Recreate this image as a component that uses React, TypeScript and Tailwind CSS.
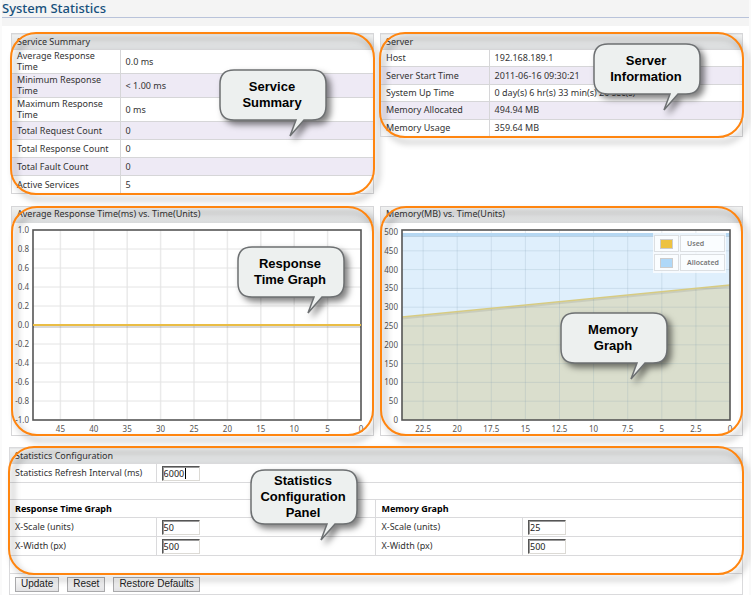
import type { ReactNode } from 'react';

const services = [
  ['Average Response Time', '0.0 ms'],
  ['Minimum Response Time', '< 1.00 ms'],
  ['Maximum Response Time', '0 ms'],
  ['Total Request Count', '0'],
  ['Total Response Count', '0'],
  ['Total Fault Count', '0'],
  ['Active Services', '5'],
];

const server = [
  ['Host', '192.168.189.1'],
  ['Server Start Time', '2011-06-16 09:30:21'],
  ['System Up Time', '0 day(s) 6 hr(s) 33 min(s) 20 sec(s)'],
  ['Memory Allocated', '494.94 MB'],
  ['Memory Usage', '359.64 MB'],
];

function Outline() {
  return (
    <div className="pointer-events-none absolute -inset-px rounded-[26px] border-2 border-[#ff850f] drop-shadow-[4px_5px_3px_rgba(0,0,0,0.4)]" />
  );
}

function Callout({ place, lines, tall = false }: { place: string; lines: string[]; tall?: boolean }) {
  const b = tall ? 56 : 52;
  return (
    <div className={`absolute z-10 w-[108px] ${place}`}>
      <svg
        width="108"
        height={b + 18}
        className="absolute left-0 top-0 overflow-visible drop-shadow-[4px_4px_3px_rgba(0,0,0,0.5)]"
        aria-hidden="true"
      >
        <path
          d={`M15 1H93Q107 1 107 15V${b - 15}Q107 ${b - 1} 93 ${b - 1}H85L71 ${b + 15}L77 ${b - 1}H15Q1 ${b - 1} 1 ${b - 15}V15Q1 1 15 1Z`}
          fill="#edf0ef"
          stroke="#6d7072"
          strokeWidth="1.5"
        />
      </svg>
      <p
        className={`relative pr-0.5 text-center font-['Liberation_Sans',Arial,sans-serif] text-[13px] font-bold leading-4 text-black ${tall ? 'pt-1' : 'pt-2.5'}`}
      >
        {lines.map((line) => (
          <span key={line} className="block">
            {line}
          </span>
        ))}
      </p>
    </div>
  );
}

const headClass =
  'h-4 bg-linear-to-b from-[#f0f1f1] to-[#d9dbdc] px-[5px] text-left font-normal leading-[14px] text-[#333]';

function InfoPanel({
  title,
  rows,
  height,
  rowHeight,
  children,
}: {
  title: string;
  rows: string[][];
  height: string;
  rowHeight: string;
  children: ReactNode;
}) {
  return (
    <section className="relative self-start">
      <table className={`w-full table-fixed border-collapse border border-[#d6d6d8] ${height}`}>
        <colgroup>
          <col className="w-[30%]" />
          <col />
        </colgroup>
        <thead>
          <tr>
            <th colSpan={2} className={headClass}>
              {title}
            </th>
          </tr>
        </thead>
        <tbody>
          {rows.map(([name, value]) => (
            <tr key={name} className={`even:bg-[#eeeaf5] ${rowHeight}`}>
              <th
                scope="row"
                className="border border-[#d6d6d8] px-[5px] pb-px text-left font-normal leading-[11px]"
              >
                {name}
              </th>
              <td className="border border-[#d6d6d8] px-[5px] pb-px leading-[11px]">{value}</td>
            </tr>
          ))}
        </tbody>
      </table>
      <Outline />
      {children}
    </section>
  );
}

function ChartPanel({ title, chart, children }: { title: string; chart: ReactNode; children: ReactNode }) {
  return (
    <section className="relative border border-[#d6d6d8]">
      <h2 className={headClass}>{title}</h2>
      {chart}
      <Outline />
      {children}
    </section>
  );
}

const chartClass = "block h-auto w-full font-['Noto_Sans',sans-serif] text-[8px]";

function ResponseChart() {
  return (
    <svg viewBox="0 1 361 212" className={chartClass} role="img" aria-label="Average response time">
      {Array.from({ length: 9 }, (_, i) => (
        <path key={i} d={`M${349 - 33.4 * (i + 1)} 8V197`} stroke="#eaeaea" strokeWidth="1.5" />
      ))}
      {Array.from({ length: 9 }, (_, i) => (
        <path key={i} d={`M21 ${8 + 19 * (i + 1)}H349`} stroke="#e4e4e4" />
      ))}
      <rect x="21" y="8" width="328" height="190" fill="none" stroke="#555" strokeWidth="1.6" />
      <path d="M21 105H349" stroke="#000" strokeOpacity="0.15" strokeWidth="2" />
      <path d="M21 103H349" stroke="#eabd45" strokeWidth="2" />
      <g fill="#545454">
        {Array.from({ length: 11 }, (_, i) => (
          <text key={i} x="17" y={11 + 19 * i} textAnchor="end">
            {((5 - i) / 5).toFixed(1)}
          </text>
        ))}
        {Array.from({ length: 10 }, (_, i) => (
          <text key={i} x={349 - 33.4 * i} y="210" textAnchor="middle">
            {i * 5}
          </text>
        ))}
      </g>
    </svg>
  );
}

function MemoryChart() {
  return (
    <svg viewBox="0 1 361 212" className={chartClass} role="img" aria-label="Memory used and allocated">
      <path d="M21 12H349V63L21 95Z" fill="#dfeffc" />
      <path d="M21 95L349 63V198H21Z" fill="#dadecd" />
      {Array.from({ length: 9 }, (_, i) => (
        <path key={i} d={`M${349 - 34.1 * (i + 1)} 8V197`} stroke="#7c9ab0" strokeOpacity="0.2" />
      ))}
      {Array.from({ length: 9 }, (_, i) => (
        <path key={i} d={`M21 ${198 - 18.8 * (i + 1)}H349`} stroke="#7c9ab0" strokeOpacity="0.2" />
      ))}
      <path d="M21 12.5H349" stroke="#b5d7f2" strokeWidth="3" />
      <path d="M21 14.5H349" stroke="#a2bdd2" strokeOpacity="0.6" />
      <path d="M21 96.5L349 64.5" stroke="#000" strokeOpacity="0.08" strokeWidth="2" />
      <path d="M21 95L349 63" stroke="#d7cb82" strokeWidth="1.5" />
      <rect x="21" y="8" width="328" height="190" fill="none" stroke="#555" strokeWidth="1.6" />
      <rect x="272" y="11" width="73" height="40" fill="#fff" fillOpacity="0.7" />
      {['Used', 'Allocated'].map((name, i) => (
        <g key={name}>
          <rect x="273.5" y={13.5 + 19 * i} width="24" height="16" fill="#fafdff" stroke="#dcdfe2" />
          <rect x="299.5" y={13.5 + 19 * i} width="44" height="16" fill="#fafdff" stroke="#dcdfe2" />
          <rect
            x="279.5"
            y={17.5 + 19 * i}
            width="12"
            height="9"
            fill={i ? '#afd8f8' : '#edc240'}
            stroke="#ccc"
          />
          <text x="306" y={24 + 19 * i} className="text-[7px] font-semibold" fill="#777">
            {name}
          </text>
        </g>
      ))}
      <g fill="#545454">
        {Array.from({ length: 11 }, (_, i) => (
          <text key={i} x="17" y={201 - 18.8 * i} textAnchor="end">
            {i * 50}
          </text>
        ))}
        {Array.from({ length: 10 }, (_, i) => (
          <text key={i} x={349 - 34.1 * i} y="210" textAnchor="middle">
            {i * 2.5}
          </text>
        ))}
      </g>
    </svg>
  );
}

function NumberCells({ id, label, value, span = 1 }: { id: string; label: string; value: string; span?: number }) {
  return (
    <>
      <th scope="row" className="border border-[#dadadc] px-[5px] text-left font-normal">
        <label htmlFor={id}>{label}</label>
      </th>
      <td colSpan={span} className="border border-[#dadadc] px-[5px]">
        <div className="relative">
          <input
            id={id}
            defaultValue={value}
            className="block h-[15px] w-[38px] border border-b-[#dcdad5] border-l-[#555] border-r-[#dcdad5] border-t-[#555] bg-white pl-px text-[9px] leading-3 text-[#222] shadow-[inset_1px_1px_0_#999] outline-none"
          />
          {span > 1 && <span className="absolute left-[23px] top-0.5 h-[11px] w-px bg-black" />}
        </div>
      </td>
    </>
  );
}

const buttonClass =
  "h-[15px] border border-[#a9a9ab] bg-linear-to-b from-[#fafafa] to-[#e2e2e4] px-[5px] font-['Liberation_Sans',Arial,sans-serif] text-[10px] leading-3 text-[#222]";

export default function App() {
  return (
    <main className="border-x-2 border-[#fafafa] bg-white font-['Noto_Sans','Open_Sans',sans-serif] text-[9px] text-[#333]">
      <header className="border-b-8 border-[#f4f4f4]">
        <h1 className="h-[18px] border-b border-[#b9c3da] bg-[#f4f4f4] text-[13px] font-medium leading-4 text-[#17507c]">
          System Statistics
        </h1>
      </header>

      <div className="grid grid-cols-2 gap-x-1.5 gap-y-3 pl-[9px] pr-1.5 pt-[7px]">
        <InfoPanel title="Service Summary" rows={services} height="h-auto" rowHeight="h-[18px]">
          <Callout place="left-[208px] top-[36px]" lines={['Service', 'Summary']} />
        </InfoPanel>
        <InfoPanel title="Server" rows={server} height="h-[104px]" rowHeight="h-[17px]">
          <Callout place="left-[213px] top-[10px]" lines={['Server', 'Information']} />
        </InfoPanel>
        <ChartPanel title="Average Response Time(ms) vs. Time(Units)" chart={<ResponseChart />}>
          <Callout place="left-[225px] top-[39px]" lines={['Response', 'Time Graph']} />
        </ChartPanel>
        <ChartPanel title="Memory(MB) vs. Time(Units)" chart={<MemoryChart />}>
          <Callout place="left-[179px] top-[105px]" lines={['Memory', 'Graph']} />
        </ChartPanel>
      </div>

      <form className="ml-[7px] mr-1.5 mt-[11px]" onSubmit={(e) => e.preventDefault()}>
        <div className="relative">
          <table className="w-full table-fixed border-collapse border border-[#dadadc] leading-3">
            <colgroup>
              <col className="w-[20%]" />
              <col className="w-[30%]" />
              <col className="w-[20%]" />
              <col className="w-[30%]" />
            </colgroup>
            <thead>
              <tr>
                <th colSpan={4} className={headClass}>
                  Statistics Configuration
                </th>
              </tr>
            </thead>
            <tbody>
              <tr className="h-[19px]">
                <NumberCells id="refresh" label="Statistics Refresh Interval (ms)" value="6000" span={3} />
              </tr>
              <tr className="h-[17px]">
                <td colSpan={4} className="border border-[#dadadc]" />
              </tr>
              <tr className="h-[18px] text-left text-black">
                <th colSpan={2} className="border border-[#dadadc] px-[5px] font-bold">
                  Response Time Graph
                </th>
                <th colSpan={2} className="border border-[#dadadc] px-[5px] font-bold">
                  Memory Graph
                </th>
              </tr>
              <tr className="h-[19px]">
                <NumberCells id="response-scale" label="X-Scale (units)" value="50" />
                <NumberCells id="memory-scale" label="X-Scale (units)" value="25" />
              </tr>
              <tr className="h-[19px]">
                <NumberCells id="response-width" label="X-Width (px)" value="500" />
                <NumberCells id="memory-width" label="X-Width (px)" value="500" />
              </tr>
              <tr className="h-[18px]">
                <td colSpan={4} className="border border-[#dadadc]" />
              </tr>
            </tbody>
          </table>
          <Outline />
          <Callout tall place="left-[241px] top-[22px]" lines={['Statistics', 'Configuration', 'Panel']} />
        </div>
        <div className="flex h-[21px] items-center gap-2 border border-t-0 border-[#dadadc] px-[5px]">
          <button type="submit" className={buttonClass}>
            Update
          </button>
          <button type="reset" className={buttonClass}>
            Reset
          </button>
          <button type="button" className={buttonClass}>
            Restore Defaults
          </button>
        </div>
      </form>
    </main>
  );
}
